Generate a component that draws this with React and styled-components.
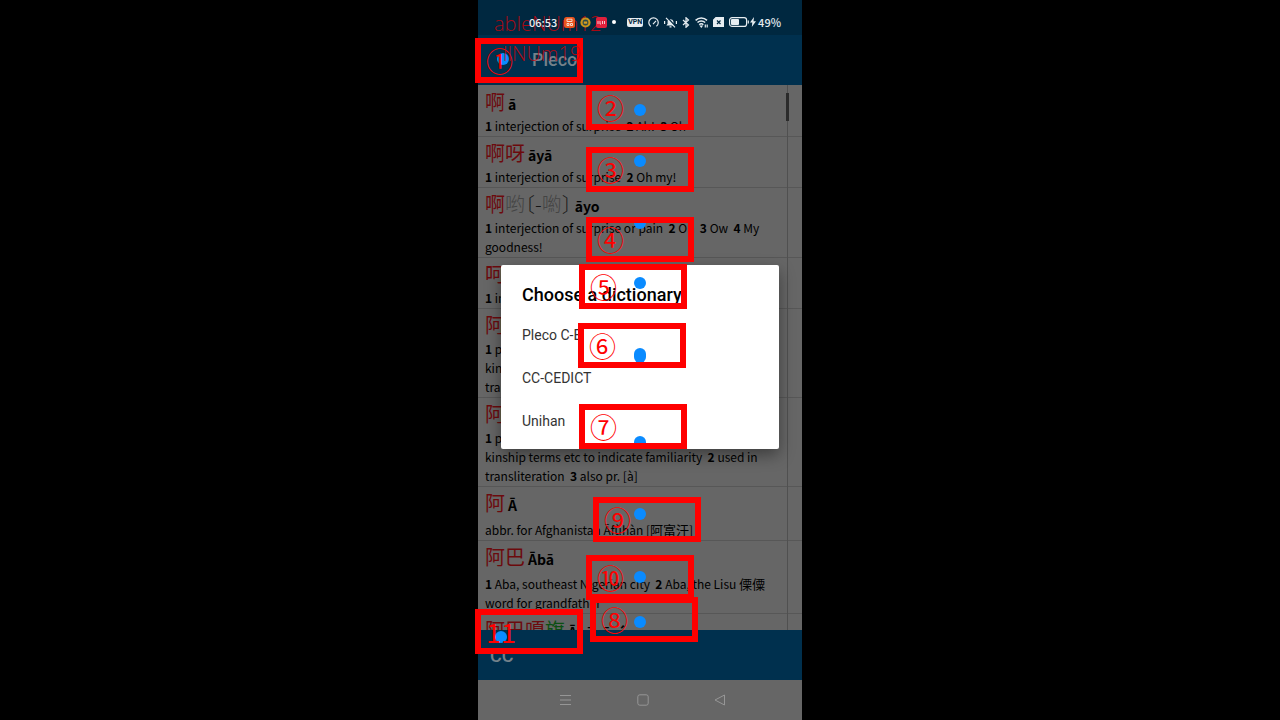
import React from "react";
import styled, { createGlobalStyle, css } from "styled-components";

const Global = createGlobalStyle`
  * { box-sizing: border-box; }
  body { margin: 0; background: #000; }
`;

const cjk = `"Noto Sans CJK SC", sans-serif`;
const roboto = `Roboto, sans-serif`;

const Stage = styled.div`
  min-height: 100vh;
  display: flex;
  justify-content: center;
  background: #000;
`;

const Phone = styled.main`
  position: relative;
  height: 100vh;
  aspect-ratio: 9 / 20;
  display: flex;
  flex-direction: column;
  background: #666;
  color: #000;
  font-family: ${cjk};
`;

const StatusBar = styled.div`
  flex: none;
  height: 35px;
  padding: 9px 21px 0 51px;
  display: flex;
  align-items: center;
  justify-content: space-between;
  background: #002840;
  color: #e6edf1;
  font: 500 11px/24px ${cjk};
`;

const StatusGroup = styled.div`
  position: relative;
  z-index: 2;
  display: flex;
  align-items: center;
  gap: ${(p) => p.$gap}px;
`;

const Clock = styled.time`
  margin-right: 2px;
`;

const Dot = styled.i`
  width: 4px;
  height: 4px;
  margin: 0 6px 0 4px;
  border-radius: 50%;
  background: #fff;
`;

const VpnBadge = styled.span`
  padding: 0 1px;
  border-radius: 2px;
  background: #e6edf1;
  color: #002840;
  font: 700 7px/9px ${roboto};
`;

const AppBar = styled.header`
  flex: none;
  height: 50px;
  padding: 0 54px;
  display: flex;
  align-items: center;
  background: #00304e;
`;

const AppTitle = styled.h1`
  margin: 0;
  color: #74818a;
  font: 500 18px/48px ${roboto};
`;

const ListArea = styled.section`
  flex: 1;
  min-height: 0;
  display: flex;
  padding-top: 1px;
  overflow: hidden;
  background: #666;
  position: relative;
`;

const EntryList = styled.ul`
  flex: 1;
  min-width: 0;
  margin: 0;
  padding: 0;
  list-style: none;
`;

const ScrollTrack = styled.div`
  position: absolute;
  top: 0;
  bottom: 0;
  right: 12px;
  width: 5px;
  padding-top: 8px;
  background: linear-gradient(#505050, #505050) center / 1px 100% no-repeat;
`;

const ScrollThumb = styled.div`
  width: 3px;
  height: 28px;
  margin: 0 1px;
  background: #2b2b2b;
`;

const Entry = styled.li`
  padding: 0 7px 1px;
  border-bottom: 1px solid #575757;
  white-space: nowrap;
`;

const Headword = styled.div`
  height: ${(p) => (p.$roomy ? 33 : 30)}px;
  display: flex;
  align-items: baseline;
  gap: 3px;
  line-height: 32px;
`;

const Hanzi = styled.span`
  font-size: 20px;
  font-feature-settings: "halt";
`;

const Tone = styled.span`
  color: ${(p) => ({ red: "#6c0a0d", grey: "#444", green: "#0b4f12", plain: "#161616" })[p.$tone]};
  font-weight: ${(p) => (p.$tone === "red" || p.$tone === "green" ? 400 : 300)};
`;

const Pinyin = styled.b`
  font-size: 14px;
  font-weight: 700;
`;

const Line = styled.div`
  font-size: 12px;
  line-height: 19px;
  white-space: pre;
`;

const Inline = styled.span`
  font-size: 13px;
`;

const BottomBar = styled.footer`
  flex: none;
  height: 50px;
  padding: 0 12px;
  background: #00304e;
  color: #74818a;
  font: 500 18px/52px ${roboto};
`;

const NavBar = styled.nav`
  flex: none;
  height: 40px;
  padding: 0 76px 0 81px;
  display: flex;
  align-items: center;
  justify-content: space-between;
  background: #666;
`;

const NavButton = styled.button`
  display: flex;
  padding: 0;
  border: 0;
  background: none;
`;

const Dialog = styled.div`
  position: absolute;
  top: 265px;
  left: 23px;
  right: 23px;
  padding: 15px 0 6px;
  border-radius: 2px;
  background: #fff;
  box-shadow: 0 6px 16px rgba(0, 0, 0, 0.4);
  font-family: ${roboto};
`;

const DialogTitle = styled.h2`
  margin: 0;
  padding: 0 21px 4px;
  font: 500 18px/30px ${roboto};
`;

const Choice = styled.button`
  display: block;
  width: 100%;
  height: 43px;
  padding: 0 21px;
  border: 0;
  background: none;
  color: #333;
  font: 400 14px/43px ${roboto};
  text-align: left;
`;

const place = css`
  position: absolute;
  left: ${(p) => p.$x}px;
  top: ${(p) => p.$y}px;
`;

const Marker = styled.div`
  ${place}
  width: 108px;
  height: 45px;
  padding: 0 5px;
  border: 6px solid #f00;
  color: #f00;
  font: 400 27px/33px ${cjk};
`;

const Touch = styled.div`
  ${place}
  width: 12px;
  height: ${(p) => p.$h || 12}px;
  border-radius: ${(p) => p.$r || "6px"};
  background: #0a8bff;
`;

const Debug = styled.div`
  ${place}
  color: rgba(200, 4, 12, 0.85);
  font: 300 20px/24px "Open Sans", sans-serif;
  white-space: nowrap;
`;

const shared = [
  ["1", " prefix used before names and"],
  ["", "kinship terms etc to indicate familiarity  ", "2", " used in"],
  ["", "transliteration  ", "3", " also pr. [à]"],
];

const entries = [
  { hanzi: [["red", "啊"]], pinyin: "ā", lines: [["1", " interjection of surprise  ", "2", " Ah!  ", "3", " Oh"]] },
  { hanzi: [["red", "啊呀"]], pinyin: "āyā", lines: [["1", " interjection of surprise  ", "2", " Oh my!"]] },
  {
    hanzi: [["red", "啊"], ["grey", "哟"], ["plain", "〔-"], ["grey", "喲"], ["plain", "〕"]],
    pinyin: "āyo",
    lines: [["1", " interjection of surprise or pain  ", "2", " Oh  ", "3", " Ow  ", "4", " My"], ["", "goodness!"]],
  },
  { hanzi: [["red", "呵"]], pinyin: "ā", lines: [["1", " interjection of surprise"]] },
  { hanzi: [["red", "阿"]], pinyin: "ā", lines: shared },
  { hanzi: [["red", "阿"]], pinyin: "ā", lines: shared },
  { roomy: true, hanzi: [["red", "阿"]], pinyin: "Ā", lines: [["", "abbr. for Afghanistan Āfùhàn [阿富汗]"]] },
  {
    roomy: true,
    hanzi: [["red", "阿巴"]],
    pinyin: "Ābā",
    lines: [["1", " Aba, southeast Nigerian city  ", "2", " Aba, the Lisu 傈僳"], ["", "word for grandfather"]],
  },
  { hanzi: [["red", "阿巴嘎"], ["green", "旗"]], pinyin: "Ābāgāqí", lines: [] },
];

const touches = [
  { x: 19, y: 53 }, { x: 156, y: 104 }, { x: 156, y: 155 },
  { x: 156, y: 223, h: 6, r: "0 0 6px 6px" },
  { x: 156, y: 277 }, { x: 156, y: 348, h: 15 },
  { x: 156, y: 436, h: 8, r: "6px 6px 0 0" },
  { x: 156, y: 508 }, { x: 156, y: 571 }, { x: 156, y: 616 }, { x: 17, y: 631 },
];

const markers = [
  ["①", -3, 38], ["②", 108, 85], ["③", 108, 147], ["④", 108, 217], ["⑤", 101, 264], ["⑥", 100, 323],
  ["⑦", 101, 404], ["⑨", 115, 497], ["⑩", 108, 555], ["⑧", 112, 597], ["11", -3, 609],
];

const Svg = ({ w, h, children }) => (
  <svg width={w} height={h} viewBox={`0 0 ${w} ${h}`} fill="none" stroke="#e6edf1" strokeWidth="1.2" aria-hidden="true">
    {children}
  </svg>
);

const withHanzi = (text) =>
  text.split(/([\u4e00-\u9fff]+)/).map((t, i) => (i % 2 ? <Inline key={i}>{t}</Inline> : t));

function StatusIcons() {
  return (
    <StatusGroup $gap={5}>
      <Dot />
      <VpnBadge>VPN</VpnBadge>
      <Svg w={11} h={11}>
        <path d="M2.8 9.4A4.7 4.7 0 1 1 8.4 9.3M5 7.2l3-3.4" />
      </Svg>
      <Svg w={13} h={11}>
        <path d="M3.5 8h6L8.8 7V4.5a2.4 2.400 0 0 0-4.600 0V7zM5.500 9.800h2" fill="#e6edf1" />
        <path d="M3 0l9 10" stroke="#002840" strokeWidth="1.4" />
        <path d="M2 .8l9 9.600M.6 4v3M12.400 4v3" />
      </Svg>
      <Svg w={8} h={11}>
        <path d="M1 3l5.500 5L4 10.300V.7L6.500 3 1 8" />
      </Svg>
      <Svg w={13} h={12}>
        <path d="M.6 4.400a8 8 0 0 1 11.400 0M2.500 6.600a5.300 5.300 0 0 1 7.600 0M4.300 8.700a2.800 2.800 0 0 1 4 0" strokeWidth="1.5" />
        <path d="M5.600 10h1.400l-.7 1zM10.300 8.500v3M12.200 8.500v3" />
      </Svg>
      <Svg w={11} h={10}>
        <path d="M3 .5h7.500v9H.5V3z" fill="#e6edf1" />
        <path d="M4 3.500l3.500 3.500M7.500 3.500L4 7" stroke="#002840" />
      </Svg>
      <Svg w={20} h={10}>
        <rect x=".6" y=".6" width="17" height="8.800" rx="2.500" />
        <rect x="2" y="2" width="8" height="6" rx="1" fill="#e6edf1" stroke="none" />
        <path d="M19.300 3.500v3" />
      </Svg>
    </StatusGroup>
  );
}

export default function App() {
  return (
    <Stage>
      <Global />
      <Phone>
        <StatusBar>
          <StatusGroup $gap={5}>
            <Clock>06:53</Clock>
            <Svg w={11} h={11}>
              <rect width="11" height="11" rx="2.500" fill="#e8541e" stroke="none" />
              <path d="M3 2.200h5v2.300H3zM3 6.500h2v2H3zM6.500 6.500h2v2h-2z" stroke="#f6d9cc" strokeWidth="1" />
            </Svg>
            <Svg w={11} h={11}>
              <circle cx="5.500" cy="5.500" r="4" fill="#2c4a4a" stroke="#c9951c" strokeWidth="2.200" />
              <path d="M3.800 4.500h3.400v2.200H3.800z" fill="#d8a020" stroke="none" />
            </Svg>
            <Svg w={11} h={11}>
              <rect width="11" height="11" rx="2" fill="#e0203c" stroke="none" />
              <path d="M2 4v3M4 4v3h1M6.500 4v3M8.500 4v3" stroke="#f4c4cc" strokeWidth="1" />
            </Svg>
          </StatusGroup>
          <StatusIcons />
          <StatusGroup $gap={2}>
            <Svg w={6} h={10}>
              <path d="M4 0L0 5.500h2.300L1.800 10 6 4.300H3.500z" fill="#e6edf1" stroke="none" />
            </Svg>
            <span>49%</span>
          </StatusGroup>
        </StatusBar>
        <AppBar>
          <AppTitle>Pleco</AppTitle>
        </AppBar>
        <ListArea>
          <EntryList>
            {entries.map((e, i) => (
              <Entry key={i}>
                <Headword $roomy={e.roomy}>
                  <Hanzi>
                    {e.hanzi.map(([tone, text]) => (
                      <Tone key={text} $tone={tone}>{text}</Tone>
                    ))}
                  </Hanzi>
                  <Pinyin>{e.pinyin}</Pinyin>
                </Headword>
                {e.lines.map((parts, n) => (
                  <Line key={n}>
                    {parts.map((t, k) => (k % 2 ? <span key={k}>{withHanzi(t)}</span> : <b key={k}>{t}</b>))}
                  </Line>
                ))}
              </Entry>
            ))}
          </EntryList>
          <ScrollTrack>
            <ScrollThumb />
          </ScrollTrack>
        </ListArea>
        <BottomBar>CC</BottomBar>
        <NavBar>
          <NavButton aria-label="Menu">
            <svg width="13" height="12" viewBox="0 0 13 12" stroke="#969696"><path d="M1 1.500h11M1 6h11M1 10.500h11" /></svg>
          </NavButton>
          <NavButton aria-label="Home">
            <svg width="12" height="12" viewBox="0 0 12 12" fill="none" stroke="#969696"><rect x=".8" y=".8" width="10.400" height="10.400" rx="2" /></svg>
          </NavButton>
          <NavButton aria-label="Back">
            <svg width="12" height="12" viewBox="0 0 12 12" fill="none" stroke="#969696" strokeLinejoin="round"><path d="M10.500 1v10L1 6z" /></svg>
          </NavButton>
        </NavBar>
        <Dialog role="dialog" aria-labelledby="choose-title">
          <DialogTitle id="choose-title">Choose a dictionary</DialogTitle>
          <Choice>Pleco C-E</Choice>
          <Choice>CC-CEDICT</Choice>
          <Choice>Unihan</Choice>
        </Dialog>
        {touches.map((t, i) => (
          <Touch key={i} $x={t.x} $y={t.y} $h={t.h} $r={t.r} />
        ))}
        {markers.map(([label, x, y]) => (
          <Marker key={label} $x={x} $y={y}>{label}</Marker>
        ))}
        <Debug $x={16} $y={12}>ableNUm12</Debug>
        <Debug $x={25} $y={42}>llNUm19</Debug>
      </Phone>
    </Stage>
  );
}
